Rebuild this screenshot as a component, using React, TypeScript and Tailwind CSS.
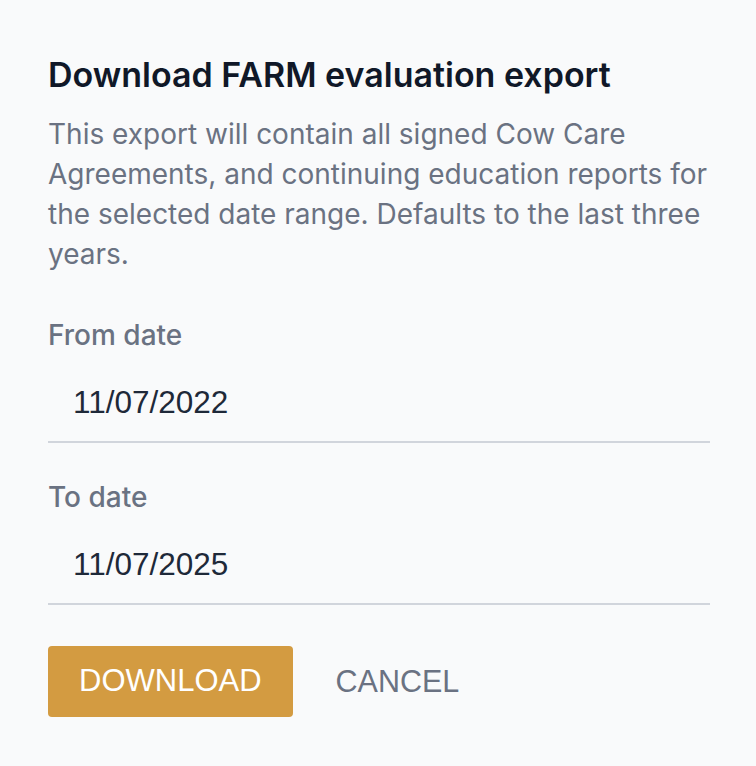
import React, { useState } from 'react';

const DateField: React.FC<{ label: string; value: string; onChange: (v: string) => void }> = ({ label, value, onChange }) => {
  return (
    <div className="flex flex-col">
      <label className="text-[28px] leading-[40px] font-medium text-gray-500">{label}</label>
      <input
        type="text"
        value={value}
        onChange={(e) => onChange(e.target.value)}
        className="mt-[14px] w-full bg-transparent px-[25px] pb-[19px] pt-[13px] text-[31.5px] leading-[40px] text-gray-800 border-b-2 border-gray-300 outline-none"
        style={{ fontFamily: '"Liberation Sans", Arial, sans-serif' }}
      />
    </div>
  );
};

export default function App() {
  const [fromDate, setFromDate] = useState('11/07/2022');
  const [toDate, setToDate] = useState('11/07/2025');

  return (
    <div className="min-h-[766px] w-[756px] bg-gray-50 font-['Inter',sans-serif]">
      <div className="pl-[48px] pr-[46px] pt-[53px]">
        <h2 className="text-[34px] leading-[44px] font-semibold text-gray-900">Download FARM evaluation export</h2>
        <p className="mt-[17px] text-[28px] leading-[40px] text-gray-500">
          This export will contain all signed Cow Care Agreements, and continuing education reports for the selected date range. Defaults to the last three years.
        </p>

        <div className="mt-[41px] flex flex-col gap-[34px]">
          <DateField label="From date" value={fromDate} onChange={setFromDate} />
          <DateField label="To date" value={toDate} onChange={setToDate} />
        </div>

        {/* Actions */}
        <div className="mt-[41px] flex items-center gap-[11px]" style={{ fontFamily: '"Liberation Sans", Arial, sans-serif' }}>
          <button className="h-[71px] rounded-[4px] bg-[#d39b41] px-[31px] text-[31px] text-white">DOWNLOAD</button>
          <button className="h-[71px] px-[32px] text-[30.5px] text-gray-500">CANCEL</button>
        </div>
      </div>
    </div>
  );
}
